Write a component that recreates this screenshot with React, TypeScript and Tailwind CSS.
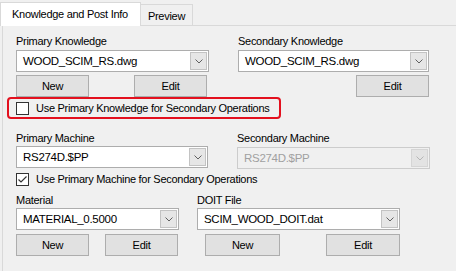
import React from 'react';

const Chevron = ({ disabled }: { disabled?: boolean }) => (
  <svg width="8" height="5" viewBox="0 0 8 5" fill="none">
    <path d="M0.5 0.5 L4 4 L7.5 0.5" stroke={disabled ? '#b5b5b5' : '#606060'} strokeWidth="1" />
  </svg>
);

const Combo = ({ text, className, disabled }: { text: string; className: string; disabled?: boolean }) => (
  <div
    className={`flex h-[22px] items-center border ${
      disabled ? 'border-[#cccccc] bg-[#f0f0f0] text-[#a0a0a0]' : 'border-[#adadad] bg-white text-black'
    } ${className}`}
  >
    <span className="flex-1 pl-[6px] text-[11.5px] leading-[20px] tracking-[-0.3px]">{text}</span>
    <div
      className={`mr-[1px] flex h-[18px] w-[17px] items-center justify-center border ${
        disabled ? 'border-[#d5d5d5] bg-[#e3e3e3]' : 'border-[#c3c3c3] bg-[#e6e6e6]'
      }`}
    >
      <Chevron disabled={disabled} />
    </div>
  </div>
);

const Btn = ({ label, className }: { label: string; className: string }) => (
  <div className={`flex h-[22px] items-center justify-center border border-[#adadad] bg-[#e1e1e1] ${className}`}>
    {label}
  </div>
);

const Check = ({ checked }: { checked?: boolean }) => (
  <div className="flex h-[13px] w-[13px] shrink-0 items-center justify-center border border-[#333333] bg-white">
    {checked && (
      <svg width="11" height="11" viewBox="0 0 11 11" fill="none">
        <path d="M1.5 5.5 L4 8 L9.5 2.5" stroke="#333333" strokeWidth="1.2" />
      </svg>
    )}
  </div>
);

export default function App() {
  return (
    <div
      className="h-[271px] w-[456px] overflow-hidden whitespace-nowrap bg-[#f0f0f0] text-[11px] tracking-[-0.28px] text-black"
      style={{ fontFamily: '"Liberation Sans", Arial, sans-serif' }}
    >
      {/* tab strip */}
      <div className="flex h-[25px] items-end">
        <div className="relative z-10 -mb-[1px] flex h-[24px] w-[141px] items-center border border-b-0 border-[#d9d9d9] bg-white pb-[1px] pl-[11px]">
          Knowledge and Post Info
        </div>
        <div className="flex h-[21px] w-[52px] items-center justify-center border border-b-0 border-l-0 border-[#d9d9d9] pt-[2px]">
          Preview
        </div>
      </div>

      {/* tab page */}
      <div className="ml-[2px] h-[246px] border-l border-t border-[#d9d9d9] pl-[13px]">
        <div className="mt-[8px] flex">
          <div className="w-[222px]">
            <div className="h-[15px] leading-[15px]">Primary Knowledge</div>
            <Combo text="WOOD_SCIM_RS.dwg" className="mt-[1px] w-[193px]" />
            <div className="mt-[3px] flex w-[191px] justify-between">
              <Btn label="New" className="w-[73px]" />
              <Btn label="Edit" className="w-[73px]" />
            </div>
          </div>
          <div className="w-[191px]">
            <div className="h-[15px] leading-[15px]">Secondary Knowledge</div>
            <Combo text="WOOD_SCIM_RS.dwg" className="mt-[1px] w-[191px]" />
            <div className="mt-[3px] flex justify-end">
              <Btn label="Edit" className="w-[73px]" />
            </div>
          </div>
        </div>

        <div className="-ml-[9px] flex h-[22px] w-[274px] items-center gap-[7px] rounded-[4px] border-2 border-[#e3101e] pl-[7px]">
          <Check />
          <span className="leading-[15px]">Use Primary Knowledge for Secondary Operations</span>
        </div>

        <div className="mt-[12px] flex">
          <div className="w-[222px]">
            <div className="h-[15px] leading-[15px]">Primary Machine</div>
            <Combo text="RS274D.$PP" className="w-[192px]" />
          </div>
          <div className="-ml-[1px] w-[193px]">
            <div className="h-[15px] leading-[15px]">Secondary Machine</div>
            <Combo text="RS274D.$PP" className="mt-[1px] w-[193px]" disabled />
          </div>
        </div>

        <div className="mt-[3px] flex h-[15px] items-center gap-[7px]">
          <Check checked />
          <span className="leading-[15px]">Use Primary Machine for Secondary Operations</span>
        </div>

        <div className="mt-[6px] flex">
          <div className="w-[181px]">
            <div className="h-[15px] leading-[15px]">Material</div>
            <Combo text="MATERIAL_0.5000" className="w-[163px]" />
            <div className="mt-[4px] flex gap-[16px]">
              <Btn label="New" className="w-[73px]" />
              <Btn label="Edit" className="w-[73px]" />
            </div>
          </div>
          <div className="w-[203px]">
            <div className="h-[15px] leading-[15px]">DOIT File</div>
            <Combo text="SCIM_WOOD_DOIT.dat" className="w-[203px]" />
            <div className="mt-[4px] flex justify-between pl-[8px]">
              <Btn label="New" className="w-[75px]" />
              <Btn label="Edit" className="w-[74px]" />
            </div>
          </div>
        </div>
      </div>
    </div>
  );
}
